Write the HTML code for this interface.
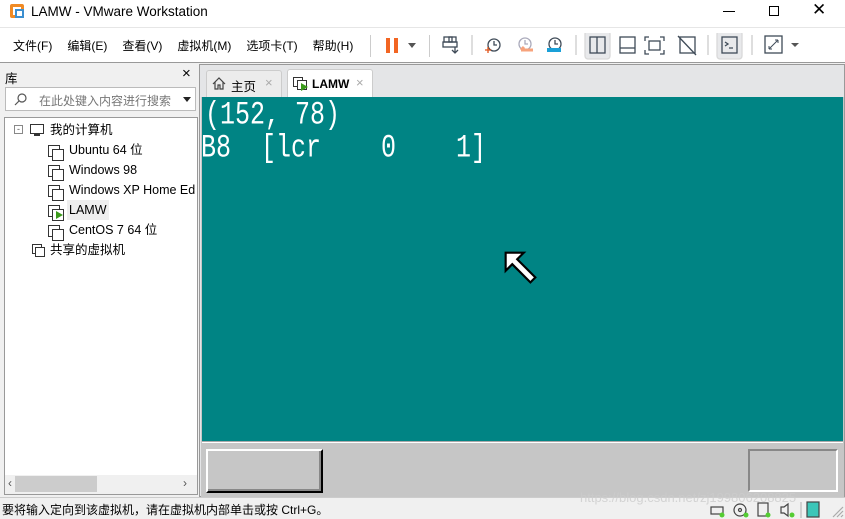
<!DOCTYPE html>
<html><head><meta charset="utf-8"><style>
*{margin:0;padding:0;box-sizing:border-box}
body{width:845px;height:519px;overflow:hidden;background:#f0f0f0;font-family:"Liberation Sans","Noto Sans CJK SC",sans-serif;font-size:12px;color:#000;position:relative}
.a{position:absolute}
.mono{font-family:"Liberation Mono","DejaVu Sans Mono",monospace;color:#fff;font-size:25px;white-space:pre;transform:scaleY(1.3);transform-origin:0 0;line-height:25px}
.menu span{margin-right:15px}
.tree div{position:absolute;left:0;height:20px;line-height:20px;font-size:12.5px}
.vmi{position:absolute;width:12px;height:12px;border:1px solid #333;background:#fff}
.tree .vmi{width:12px;height:12px;line-height:0}
</style></head><body>
<!-- title bar -->
<div class="a" style="left:0;top:0;width:845px;height:27px;background:#fff"></div>
<div class="a" style="left:10px;top:4px;width:14px;height:14px;border:3px solid #f08a24;border-radius:2px"></div>
<div class="a" style="left:15px;top:9px;width:9px;height:9px;border:2px solid #3c8fd0;background:#fff"></div>
<div class="a" style="left:31px;top:4px;font-size:13.5px">LAMW - VMware Workstation</div>
<div class="a" style="left:723px;top:11px;width:12px;height:1px;background:#000"></div>
<div class="a" style="left:769px;top:6px;width:10px;height:10px;border:1px solid #000"></div>
<div class="a" style="left:812px;top:0px;font-size:17px;font-weight:300">✕</div>
<!-- toolbar -->
<div class="a" style="left:0;top:27px;width:845px;height:36px;background:#fff;border-top:1px solid #e6e6e6;border-bottom:1px solid #999"></div>
<div class="a menu" style="left:13px;top:37px;font-size:12px;white-space:nowrap"><span>文件(F)</span><span>编辑(E)</span><span>查看(V)</span><span>虚拟机(M)</span><span>选项卡(T)</span><span>帮助(H)</span></div>
<div class="a" style="left:370px;top:35px;width:1px;height:22px;background:#ccc"></div>
<div class="a" style="left:386px;top:38px;width:4px;height:15px;background:#f26522"></div>
<div class="a" style="left:394px;top:38px;width:4px;height:15px;background:#f26522"></div>
<div class="a" style="left:408px;top:43px;border:4px solid transparent;border-top:5px solid #555"></div>
<div class="a" style="left:429px;top:35px;width:1px;height:22px;background:#ccc"></div>
<svg class="a" style="left:440px;top:33px" width="400" height="28" fill="none" stroke="#3f4b58" stroke-width="1.3">
 <rect x="4" y="4" width="8" height="5"/><rect x="9" y="4" width="7" height="5"/><rect x="3" y="9" width="14" height="5"/><path d="M15 14v5M12 17l3 3 3-3"/>
 <line x1="32" y1="2" x2="32" y2="22" stroke="#ccc"/>
 <circle cx="54" cy="12" r="6"/><path d="M54 8v4h3"/><path d="M45 17h6M48 14v6" stroke="#e0541a"/>
 <circle cx="85" cy="11" r="6" stroke="#aab"/><path d="M85 7v4h3" stroke="#aab"/><path d="M81 17h12M81 17l3-3" stroke="#f7a37c" stroke-width="3"/>
 <circle cx="115" cy="11" r="6"/><path d="M115 7v4h3"/><path d="M107 16h14M107 18h14" stroke="#1aa0d8" stroke-width="2"/>
 <line x1="136" y1="2" x2="136" y2="22" stroke="#ccc"/>
 <rect x="145" y="-2" width="25" height="28" rx="3" fill="#e8e9eb" stroke="#d9d9d9"/>
 <rect x="150" y="4" width="15" height="16"/><line x1="157" y1="4" x2="157" y2="20"/>
 <rect x="180" y="4" width="15" height="16"/><line x1="180" y1="15" x2="195" y2="15"/>
 <path d="M209 4h-4v4M220 4h4v4M209 21h-4v-4M220 21h4v-4"/><rect x="209" y="8" width="11" height="9"/>
 <rect x="240" y="4" width="15" height="16"/><path d="M238 3l18 19"/>
 <line x1="268" y1="2" x2="268" y2="22" stroke="#ccc"/>
 <rect x="277" y="-2" width="25" height="28" rx="3" fill="#e8e9eb" stroke="#d9d9d9"/>
 <rect x="282" y="4" width="15" height="16"/><path d="M285 9l3 2-3 2M289 15h4"/>
 <line x1="312" y1="2" x2="312" y2="22" stroke="#ccc"/>
 <rect x="325" y="3" width="17" height="17"/><path d="M329 16l9-9M329 16v-3M329 16h3M338 7h-3M338 7v3" stroke-width="1"/>
 <path d="M351 10h8l-4 4z" fill="#555" stroke="none"/>
</svg>
<!-- library -->
<div class="a" style="left:5px;top:68px;font-size:12.5px">库</div>
<div class="a" style="left:182px;top:65px;font-size:15px">×</div>
<div class="a" style="left:5px;top:87px;width:191px;height:24px;background:#fff;border:1px solid #bbb"></div>
<svg class="a" style="left:14px;top:92px" width="14" height="14" fill="none" stroke="#555" stroke-width="1.2"><circle cx="8" cy="6" r="4"/><path d="M5 9l-4 4"/></svg>
<div class="a" style="left:39px;top:92px;color:#777;font-size:12px">在此处键入内容进行搜索</div>
<div class="a" style="left:183px;top:97px;border:4px solid transparent;border-top:5px solid #222"></div>
<div class="a" style="left:4px;top:117px;width:194px;height:378px;background:#fff;border:1px solid #999"></div>
<div class="a tree" style="left:0;top:120px;width:196px;height:140px;overflow:hidden">
 <div style="left:14px;top:5px;width:9px;height:9px;border:1px solid #888;font-size:9px;line-height:6px;text-align:center;color:#555">-</div>
 <div style="left:30px;top:4px;width:14px;height:10px;border:1.5px solid #333"></div>
 <div style="left:34px;top:14px;width:6px;height:2px;background:#333"></div>
 <div style="left:50px;top:0">我的计算机</div>
 <div class="vmi" style="left:48px;top:25px"></div><div class="vmi" style="left:52px;top:29px"></div><div style="left:69px;top:20px">Ubuntu 64 位</div>
 <div class="vmi" style="left:48px;top:45px"></div><div class="vmi" style="left:52px;top:49px"></div><div style="left:69px;top:40px">Windows 98</div>
 <div class="vmi" style="left:48px;top:65px"></div><div class="vmi" style="left:52px;top:69px"></div><div style="left:69px;top:60px;white-space:nowrap">Windows XP Home Edition</div>
 <div style="left:67px;top:80px;width:42px;height:20px;background:#eee"></div>
 <div class="vmi" style="left:48px;top:85px"></div><div class="vmi" style="left:52px;top:89px"></div>
 <div style="left:56px;top:91px;width:0;height:0;border-left:7px solid #3a9a1a;border-top:4px solid transparent;border-bottom:4px solid transparent"></div>
 <div style="left:69px;top:80px">LAMW</div>
 <div class="vmi" style="left:48px;top:105px"></div><div class="vmi" style="left:52px;top:109px"></div><div style="left:69px;top:100px">CentOS 7 64 位</div>
 <div class="vmi" style="left:32px;top:124px;width:10px;height:10px"></div><div class="vmi" style="left:35px;top:127px;width:10px;height:10px"></div><div style="left:50px;top:120px">共享的虚拟机</div>
</div>
<div class="a" style="left:5px;top:475px;width:192px;height:19px;background:#f0f0f0"></div>
<div class="a" style="left:15px;top:476px;width:82px;height:16px;background:#ccc"></div>
<div class="a" style="left:8px;top:476px;color:#555;font-size:12px">‹</div>
<div class="a" style="left:183px;top:476px;color:#555;font-size:12px">›</div>
<!-- tabs -->
<div class="a" style="left:199px;top:64px;width:646px;height:433px;background:#e4e5e7;border:1px solid #999"></div>
<div class="a" style="left:206px;top:70px;width:76px;height:27px;background:#ececec;border:1px solid #ccc;border-bottom:none;border-radius:3px 3px 0 0"></div>
<svg class="a" style="left:212px;top:77px" width="14" height="13" fill="none" stroke="#444" stroke-width="1.2"><path d="M1 7l6-6 6 6M3 5v7h3V8h2v4h3V5"/></svg>
<div class="a" style="left:231px;top:76px;font-size:12.5px">主页</div>
<div class="a" style="left:265px;top:75px;color:#aaa;font-size:13px">×</div>
<div class="a" style="left:287px;top:69px;width:86px;height:28px;background:#fff;border:1px solid #ccc;border-bottom:none;border-radius:3px 3px 0 0"></div>
<div class="vmi" style="left:293px;top:77px;width:10px;height:10px"></div><div class="vmi" style="left:297px;top:80px;width:10px;height:10px"></div>
<div class="a" style="left:301px;top:83px;border-left:7px solid #3a9a1a;border-top:4px solid transparent;border-bottom:4px solid transparent"></div>
<div class="a" style="left:312px;top:77px;font-size:12px;font-weight:bold">LAMW</div>
<div class="a" style="left:356px;top:75px;color:#aaa;font-size:13px">×</div>
<!-- screen -->
<div class="a" style="left:201px;top:97px;width:643px;height:400px;background:#c6c6c6"></div>
<div class="a" style="left:202px;top:97px;width:641px;height:344px;background:#008484"></div>
<div class="a" style="left:202px;top:441px;width:641px;height:2px;background:#fff;border-top:1px solid #aaa"></div>
<div class="a mono" style="left:205px;top:99px">(152, 78)</div>
<div class="a mono" style="left:201px;top:132px">B8  [lcr    0    1]</div>
<svg class="a" style="left:504px;top:251px" width="38" height="38"><path d="M1 1h11l-4 4 11 11-3 3L5 8 1 12z" fill="#fff" stroke="#000" stroke-width="1.3" transform="scale(1.65)"/></svg>
<div class="a" style="left:206px;top:449px;width:117px;height:44px;background:#c6c6c6;border-top:2px solid #fff;border-left:2px solid #fff;border-right:2px solid #000;border-bottom:2px solid #000;box-shadow:inset -2px -2px 0 #888"></div>
<div class="a" style="left:748px;top:449px;width:90px;height:43px;background:#c6c6c6;border-top:2px solid #888;border-left:2px solid #888;border-right:2px solid #fff;border-bottom:2px solid #fff"></div>
<!-- status -->
<div class="a" style="left:0;top:497px;width:845px;height:22px;background:#f0f0f0;border-top:1px solid #ccc"></div>
<div class="a" style="left:2px;top:501px;font-size:12px">要将输入定向到该虚拟机，请在虚拟机内部单击或按 Ctrl+G。</div>
<div class="a" style="left:580px;top:490px;color:#ccc;font-size:13px;opacity:.8">https://blog.csdn.net/zj199806208825</div>
<svg class="a" style="left:708px;top:500px" width="137" height="19" fill="none" stroke="#444" stroke-width="1.2">
 <rect x="3" y="7" width="12" height="7"/><circle cx="14" cy="15" r="2.5" fill="#5c3" stroke="none"/>
 <circle cx="32" cy="10" r="6"/><circle cx="32" cy="10" r="1.5"/><circle cx="38" cy="15" r="2.5" fill="#5c3" stroke="none"/>
 <rect x="50" y="3" width="10" height="13"/><circle cx="60" cy="15" r="2.5" fill="#5c3" stroke="none"/>
 <path d="M73 7h3l4-3v12l-4-3h-3z"/><circle cx="84" cy="15" r="2.5" fill="#5c3" stroke="none"/>
 <line x1="93" y1="2" x2="93" y2="18" stroke="#bbb"/>
 <rect x="99" y="2" width="12" height="15" fill="#3cc6b8"/>
 <path d="M125 17l10-10M129 17l6-6M133 17l2-2" stroke="#aaa"/>
</svg>
</body></html>
